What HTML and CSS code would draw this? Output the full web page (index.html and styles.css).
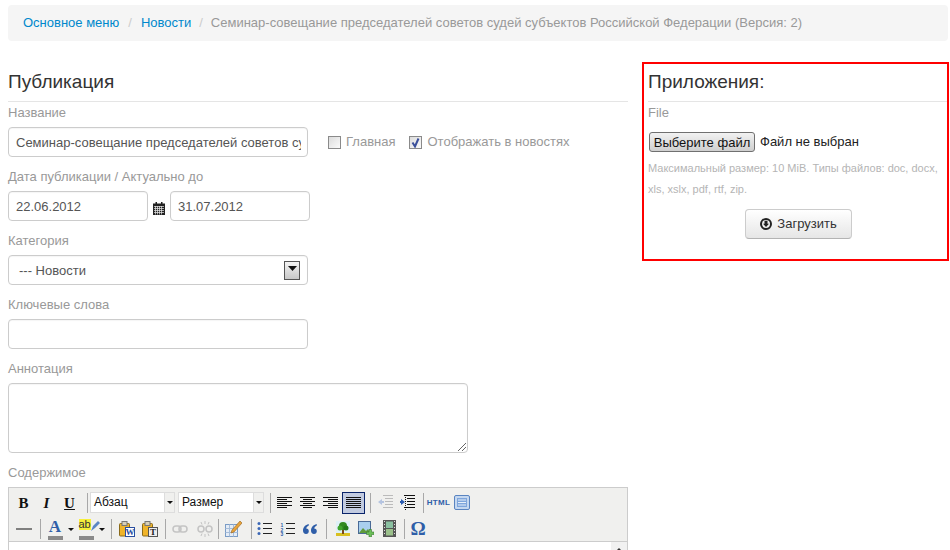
FILE: index.html
```html
<!DOCTYPE html>
<html lang="ru">
<head>
<meta charset="utf-8">
<title>Публикация</title>
<link rel="stylesheet" href="styles.css">
</head>
<body>
<nav class="crumb">
  <a href="#">Основное меню</a><span class="slash">/</span><a href="#">Новости</a><span class="slash">/</span><span class="current">Семинар-совещание председателей советов судей субъектов Российской Федерации (Версия: 2)</span>
</nav>
<div class="columns">
  <main class="left">
    <h2 class="heading">Публикация</h2>
    <label class="lbl">Название</label>
    <div class="row name-row">
      <div class="input w300 clip"><span class="clip-in">Семинар-совещание председателей советов судей субъектов</span></div>
      <span class="check"></span><span class="check-text">Главная</span>
      <span class="check on"><svg width="11" height="11" viewBox="0 0 11 11"><path d="M2.500 5.500 5 9.500 8.500 1.500" fill="none" stroke="#3a4f9a" stroke-width="2"/></svg></span><span class="check-text">Отображать в новостях</span>
    </div>
    <label class="lbl">Дата публикации / Актуально до</label>
    <div class="row">
      <div class="input w140">22.06.2012</div>
      <svg class="cal" width="12" height="13" viewBox="0 0 12 13"><path d="M0 1.500h2.500V0h1.500v1.500h4V0h1.500v1.500H12V13H0z" fill="#222"/><path d="M1 4.500h10M1 6.500h10M1 8.500h10M1 10.500h10M2.500 4v8.500M4.500 4v8.500M6.500 4v8.500M8.500 4v8.500" stroke="#e8e8e8" stroke-width=".7"/></svg>
      <div class="input w140">31.07.2012</div>
    </div>
    <label class="lbl">Категория</label>
    <div class="input w300 sel">
      <span class="sel-text">--- Новости</span>
      <span class="sel-btn"><svg width="9" height="5" viewBox="0 0 9 5"><path d="M0 0h9L4.500 5z" fill="#111"/></svg></span>
    </div>
    <label class="lbl">Ключевые слова</label>
    <div class="input w300"></div>
    <label class="lbl">Аннотация</label>
    <div class="input area">
      <svg class="grip" width="9" height="9" viewBox="0 0 9 9"><path d="M1 9 9 1M5 9 9 5" stroke="#666" stroke-width="1"/></svg>
    </div>
    <label class="lbl">Содержимое</label>
    <div class="editor">
      <div class="bar">
        <span class="tb txt bold">B</span><span class="tb txt ital">I</span><span class="tb txt und">U</span>
        <i class="sep s1"></i>
        <span class="mce"><span class="mce-v">Абзац</span><span class="mce-a"></span></span>
        <span class="mce m2"><span class="mce-v">Размер</span><span class="mce-a"></span></span>
        <i class="sep s1"></i>
        <span class="tb"><svg width="15" height="12" viewBox="0 0 15 12"><path d="M0 .5h15M0 2.500h10M0 4.500h15M0 6.500h10M0 8.500h15M0 10.500h10" stroke="#111"/></svg></span>
        <span class="tb"><svg width="15" height="12" viewBox="0 0 15 12"><path d="M0 .5h15M3 2.500h9M0 4.500h15M3 6.500h9M0 8.500h15M3 10.500h9" stroke="#111"/></svg></span>
        <span class="tb"><svg width="15" height="12" viewBox="0 0 15 12"><path d="M0 .5h15M5 2.500h10M0 4.500h15M5 6.500h10M0 8.500h15M5 10.500h10" stroke="#111"/></svg></span>
        <span class="tb active"><svg width="15" height="12" viewBox="0 0 15 12"><path d="M0 .5h15M0 2.500h15M0 4.500h15M0 6.500h15M0 8.500h15M0 10.500h15" stroke="#111"/></svg></span>
        <i class="sep s2"></i>
        <span class="tb"><svg width="16" height="15" viewBox="0 0 16 15"><path d="M6 .5h10M8 3.500h8M8 6.500h8M8 9.500h8M6 12.500h10" stroke="#bbb"/><path d="M1 7l4-3v2h2v2H5v2z" fill="#b5c4e0"/></svg></span>
        <span class="tb"><svg width="16" height="15" viewBox="0 0 16 15"><path d="M4 .5h11M7 3.500h8M7 6.500h8M7 9.500h8M4 12.500h11" stroke="#111"/><path d="M5.500 0v15" stroke="#111" stroke-dasharray="1 1"/><path d="M5 7 1 4v2H0v2h1v2z" fill="#2a5bb0"/></svg></span>
        <i class="sep s3"></i>
        <span class="tb txt html">HTML</span>
        <span class="tb"><svg width="16" height="15" viewBox="0 0 16 15"><rect x=".5" y=".5" width="15" height="14" rx="1.500" fill="#c5d8f0" stroke="#5a84c0"/><rect x="3" y="3" width="10" height="9" fill="#7fa6dc"/><path d="M4 5h8M4 7.500h8M4 10h8" stroke="#e8f0fa"/></svg></span>
      </div>
      <div class="bar">
        <span class="tb"><svg width="16" height="2" viewBox="0 0 16 2"><path d="M0 1h16" stroke="#111"/></svg></span>
        <i class="sep s4"></i>
        <span class="tb color"><b class="big-a">A</b><i class="swatch"></i></span><span class="mini"></span>
        <span class="tb color hl"><span class="ab">ab</span><svg class="pen" width="10" height="11" viewBox="0 0 10 11"><path d="M1 10 3 5l5-5 2 2-5 5z" fill="#5a86c5"/></svg><i class="swatch"></i></span><span class="mini"></span>
        <i class="sep s5"></i>
        <span class="tb"><svg width="16" height="16" viewBox="0 0 16 16"><rect x="0.500" y="2.500" width="10" height="12.500" rx="1" fill="#f0b429" stroke="#8a6a1a"/><rect x="3" y=".5" width="5" height="4" fill="#d8d0b8" stroke="#777"/><rect x="6.500" y="6.500" width="9" height="9" fill="#fff" stroke="#2a4fa0"/><text x="11" y="14" class="svg-w">W</text></svg></span>
        <span class="tb"><svg width="16" height="16" viewBox="0 0 16 16"><rect x="0.500" y="2.500" width="10" height="12.500" rx="1" fill="#f0b429" stroke="#8a6a1a"/><rect x="3" y=".5" width="5" height="4" fill="#d8d0b8" stroke="#777"/><rect x="6.500" y="6.500" width="9" height="9" fill="#eee" stroke="#555"/><text x="11" y="14" class="svg-t">T</text></svg></span>
        <i class="sep s6"></i>
        <span class="tb w25"><svg width="16" height="8" viewBox="0 0 16 8"><rect x="1" y="1" width="8" height="6" rx="3" fill="none" stroke="#c4c4c4" stroke-width="1.500"/><rect x="7" y="1" width="8" height="6" rx="3" fill="none" stroke="#c4c4c4" stroke-width="1.500"/></svg></span>
        <span class="tb w25"><svg width="16" height="16" viewBox="0 0 16 16"><rect x="1" y="5" width="6" height="6" rx="3" fill="none" stroke="#c4c4c4" stroke-width="1.500"/><rect x="9" y="5" width="6" height="6" rx="3" fill="none" stroke="#c4c4c4" stroke-width="1.500"/><path d="M8 0v3M8 13v3M4 1l1 2.500M12 1l-1 2.500M4 15l1-2.500M12 15l-1-2.500" stroke="#c4c4c4"/></svg></span>
        <i class="sep s7"></i>
        <span class="tb"><svg width="17" height="17" viewBox="0 0 17 17"><rect x=".5" y="4.500" width="12" height="12" fill="#e4ecf6" stroke="#7a9cc6"/><path d="M.5 8.500h12M.5 12.500h12M4.500 4.500v12M8.500 4.500v12" stroke="#a6bdd9"/><path d="M7 10 15 1l2 2-8 9-3 1z" fill="#e8a33a" stroke="#94611c" stroke-width=".6"/></svg></span>
        <i class="sep s8"></i>
        <span class="tb"><svg width="15" height="13" viewBox="0 0 15 13"><path d="M6 1.500h9M6 6.500h9M6 11.500h9" stroke="#222"/><circle cx="2" cy="1.500" r="1.500" fill="#3a66b5"/><circle cx="2" cy="6.500" r="1.500" fill="#3a66b5"/><circle cx="2" cy="11.500" r="1.500" fill="#3a66b5"/></svg></span>
        <span class="tb"><svg width="15" height="14" viewBox="0 0 15 14"><path d="M6 1.500h9M6 6.500h9M6 11.500h9" stroke="#222"/><text x="2" y="4.500" class="svg-n">1</text><text x="2" y="9.500" class="svg-n">2</text><text x="2" y="14" class="svg-n">3</text></svg></span>
        <span class="tb w22"><svg width="14" height="10" viewBox="0 0 14 10"><path d="M5.500 0C2.500 1 0 3 0 6.500 0 8.500 1.200 10 3 10s2.800-1.200 2.800-2.800S4.800 4.500 3.200 4.500C3.500 3 4.500 2 6 1.200zM13.500 0c-3 1-5.500 3-5.500 6.500 0 2 1.200 3.500 3 3.500s2.800-1.200 2.800-2.800-1-2.700-2.600-2.700c.3-1.500 1.300-2.500 2.800-3.300z" fill="#2f5ea8"/></svg></span>
        <i class="sep s9"></i>
        <span class="tb"><svg width="14" height="15" viewBox="0 0 14 15"><rect width="14" height="15" fill="#dff0f7"/><path d="M0 12h14v3H0z" fill="#d8c020"/><path d="M6 8h2v5H6z" fill="#7a4a1a"/><circle cx="7" cy="5" r="4" fill="#2f8a22"/><circle cx="4" cy="7" r="2.500" fill="#3fa52e"/><circle cx="10" cy="7" r="2.500" fill="#1f7a1a"/></svg></span>
        <span class="tb"><svg width="16" height="16" viewBox="0 0 16 16"><rect x=".5" y=".5" width="12" height="12" fill="#a9cfee" stroke="#4a6a96"/><path d="M1 12 5 7l3 3 2-2 2 4z" fill="#5f9a3a"/><path d="M11 8.500h2.500v2.500H16v2.500h-2.500V16H11v-2.500H8.500V11H11z" fill="#6cbf58" stroke="#3a7a30" stroke-width=".6"/></svg></span>
        <span class="tb"><svg width="13" height="17" viewBox="0 0 13 17"><rect width="13" height="17" fill="#555"/><rect x="3" y="1.500" width="7" height="6.500" fill="#8ac0a0"/><rect x="3" y="9" width="7" height="6.500" fill="#9ac08a"/><path d="M1 1.500h1M1 4.500h1M1 7.500h1M1 10.500h1M1 13.500h1M11 1.500h1M11 4.500h1M11 7.500h1M11 10.500h1M11 13.500h1" stroke="#ddd"/></svg></span>
        <i class="sep s10"></i>
        <span class="tb txt omega">Ω</span>
      </div>
      <div class="edit-body"><span class="scroll"></span></div>
    </div>
  </main>
  <aside class="panel">
    <h2 class="heading">Приложения:</h2>
    <label class="lbl">File</label>
    <div class="file-row"><span class="file-btn">Выберите файл</span><span class="file-none">Файл не выбран</span></div>
    <p class="hint">Максимальный размер: 10 MiB. Типы файлов: doc, docx, xls, xslx, pdf, rtf, zip.</p>
    <div class="up-wrap"><span class="up-btn"><svg width="12" height="12" viewBox="0 0 12 12"><circle cx="6" cy="6" r="5" fill="none" stroke="#222" stroke-width="2"/><path d="M4.500 2.800h3v3H9L6 9 3 5.800h1.500z" fill="#222"/></svg>Загрузить</span></div>
  </aside>
</div>
</body>
</html>
```
FILE: styles.css
```css
html { overflow: hidden; height: 100%; }
* { box-sizing: border-box; }
body {
  margin: 0;
  padding: 5px 2px 0 8px;
  font: 13px/20px "Liberation Sans", Arial, sans-serif;
  color: #333;
  background: #fff;
}
.crumb {
  height: 36px;
  padding: 8px 15px;
  background: #f5f5f5;
  border-radius: 4px;
  margin-bottom: 21px;
  white-space: nowrap;
  overflow: hidden;
}
.crumb a { color: #0088cc; text-decoration: none; }
.slash { color: #ccc; padding: 0 9px; }
.slash + a + .slash { padding: 0 8px; }
.current { color: #999; }
.columns { display: flex; align-items: flex-start; }
.left { width: 620px; flex: none; }
.heading {
  margin: 0;
  height: 40px;
  padding-top: 5px;
  font-size: 19px;
  line-height: 30px;
  font-weight: 400;
  color: #333;
  border-bottom: 1px solid #e5e5e5;
}
.lbl { display: block; color: #999; line-height: 22px; margin-bottom: 5px; height: 20px; }
.row { display: flex; align-items: center; margin-bottom: 9px; }
.input {
  height: 30px;
  line-height: 29px;
  padding: 0 7px;
  border: 1px solid #ccc;
  border-radius: 4px;
  color: #555;
  background: #fff;
  margin-bottom: 9px;
  box-shadow: inset 0 1px 1px rgba(0,0,0,.04);
}
.row .input { margin-bottom: 0; }
.w300 { width: 300px; }
.w140 { width: 140px; }
.clip { flex: none; padding-right: 6px; }
.clip-in { display: block; overflow: hidden; white-space: nowrap; height: 28px; }
.check {
  width: 13px; height: 13px;
  border: 1px solid #8a8a8a;
  background: linear-gradient(135deg, #dcdcdc, #fafafa);
  margin: 0 5px 0 0;
  display: flex; align-items: center; justify-content: center;
}
.name-row .check:first-of-type { margin-left: 20px; }
.check-text { color: #999; margin-right: 14px; line-height: 22px; }
.cal { margin: 0 5px 0 5px; flex: none; position: relative; top: 2px; }
.sel { display: flex; align-items: center; justify-content: space-between; padding: 0 7px 0 10px; }
.sel-btn {
  width: 16px; height: 19px;
  border: 1px solid #555;
  background: linear-gradient(#f4f4f4, #c8c8c8);
  display: flex; align-items: center; justify-content: center;
  padding-bottom: 3px;
}
.area { width: 460px; height: 70px; position: relative; }
.grip { position: absolute; right: 1px; bottom: 1px; }
.editor { width: 620px; height: 200px; border: 1px solid #ccc; background: #f0f0ee; padding-top: 1px; }
.bar { height: 27px; display: flex; align-items: center; padding-left: 3px; }
.bar + .bar { padding-left: 3.500px; height: 25px; }
.tb { width: 23px; height: 22px; flex: none; display: flex; align-items: center; justify-content: center; position: relative; }
.tb.w25 { width: 25px; }
.tb.w22 { width: 22px; }
.txt { font-family: "Liberation Serif", serif; font-size: 15px; font-weight: 700; color: #111; }
.ital { font-style: italic; }
.und { text-decoration: underline; }
.html { font: 700 8px/1 "Liberation Sans", sans-serif; color: #2f5ea8; letter-spacing: .3px; }
.omega { color: #2f5ea8; font-size: 19px; }
.active { border: 1px solid #0a246a; background: #c2cbe0; }
.sep { display: block; width: 1px; height: 20px; background: #a8a8a8; flex: none; }
.s1 { margin: 0 2px 0 6px; }
.s2 { margin: 0 2px 0 5px; }
.s3 { margin: 0 3px 0 4px; }
.s4 { margin: 0 4px 0 4px; }
.s5 { margin: 0 4px 0 4px; }
.s6 { margin: 0 2px 0 3px; }
.s7 { margin: 0 3px 0 0; }
.s8 { margin: 0 1px 0 6px; }
.s9 { margin: 0 5px 0 5px; }
.s10 { margin: 0 2px 0 3px; }
.mce {
  width: 85px; height: 21px; flex: none; display: flex;
  font: 12px/18px "Liberation Sans", sans-serif;
  color: #111;
  border: 1px solid #ddd;
  background: #fff;
}
.mce.m2 { margin-left: 3px; width: 86px; }
.mce-v { flex: 1; padding-left: 3px; }
.mce-a { width: 10px; background: #f0f0ee; border-left: 1px solid #ddd; position: relative; }
.mce-a::after {
  content: ""; position: absolute; left: 2px; top: 8px;
  border: 3px solid transparent; border-top: 3px solid #111; border-bottom: 0;
}
.color { flex-direction: column; justify-content: flex-start; padding-top: 1px; }
.big-a { font: 700 17px/16px "Liberation Serif", serif; color: #2f5ea8; margin-left: -2px; }
.swatch { display: block; width: 15px; height: 4px; background: #8a8a8a; position: absolute; left: 3px; bottom: 0; }
.ab { font: 11px/11px "Liberation Sans", sans-serif; background: #f7ef3a; color: #333; position: absolute; left: 3px; top: 1px; }
.pen { position: absolute; left: 14px; top: 3px; }
.mini { width: 9px; height: 22px; flex: none; position: relative; margin-left: -1px; }
.mini::after {
  content: ""; position: absolute; left: 1px; top: 10px;
  border: 3px solid transparent; border-top: 3px solid #111; border-bottom: 0;
}
.svg-w { font: 700 9px "Liberation Serif", serif; fill: #2a4fa0; text-anchor: middle; }
.svg-t { font: 700 9px "Liberation Serif", serif; fill: #222; text-anchor: middle; }
.svg-n { font: 700 5px "Liberation Sans", sans-serif; fill: #2f5ea8; text-anchor: middle; }
.edit-body { height: 100px; background: #fff; border-top: 1px solid #ccc; position: relative; }
.scroll { position: absolute; right: 0; top: 0; bottom: 0; width: 16px; background: #f1f1f1; }
.scroll::after {
  content: ""; position: absolute; left: 6px; top: 6px;
  border: 2px solid transparent; border-bottom: 2px solid #333; border-top: 0;
}
.panel {
  width: 307px;
  height: 199px;
  margin-left: 14px;
  border: 2px solid #f00;
  padding: 0 0 0 4px;
  flex: none;
  margin-right: -1px;
}
.panel .heading { height: 38px; padding-top: 3px; }
.panel .lbl { margin-bottom: 10px; }
.file-row { display: flex; align-items: center; height: 20px; margin-bottom: 6px; color: #222; line-height: 22px; }
.file-btn {
  margin-left: 1px;
  width: 106px; height: 20px;
  border: 1px solid #707070;
  border-radius: 3px;
  background: linear-gradient(#f2f2f2, #cfcfcf);
  color: #111;
  text-align: center;
  line-height: 19px;
}
.file-none { margin-left: 5px; }
.hint { margin: 0; font-size: 11px; line-height: 21px; color: #b5b5b5; width: 296px; }
.up-wrap { display: flex; justify-content: center; margin-top: 9px; padding-left: 2px; }
.up-btn {
  width: 107px; height: 30px;
  display: flex; align-items: center; justify-content: center; gap: 5px;
  border: 1px solid #ccc;
  border-bottom-color: #b3b3b3;
  border-radius: 4px;
  background: linear-gradient(#fff, #e6e6e6);
  color: #333;
}
```
